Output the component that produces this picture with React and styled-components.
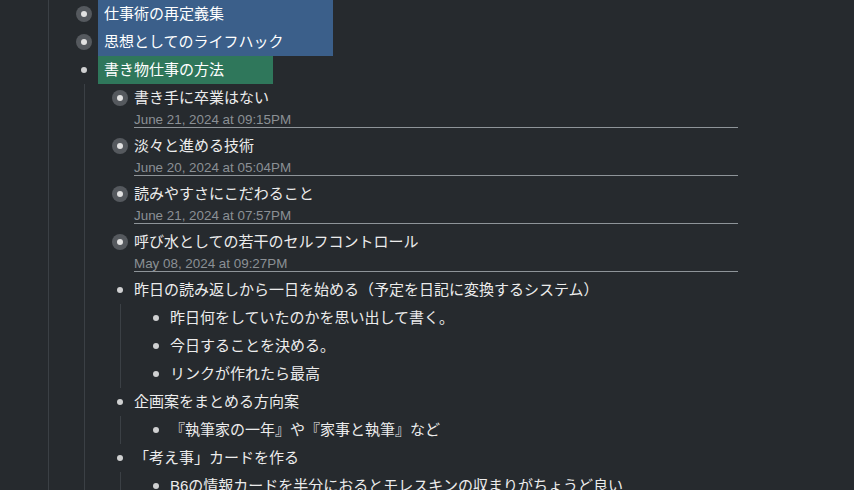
import React from 'react';
import styled, { createGlobalStyle } from 'styled-components';

const Global = createGlobalStyle`
  html, body { margin: 0; padding: 0; background: #262a2e; overflow: hidden; }
  body {
    font-family: "Liberation Sans", "Noto Sans CJK JP", sans-serif;
    color: #e8e8e8;
    -webkit-font-smoothing: antialiased;
  }
`;

const Page = styled.div`
  width: 854px;
  height: 490px;
  overflow: hidden;
`;

const Children = styled.div`
  margin-left: ${p => (p.$root ? 48 : 12)}px;
  border-left: 1px solid #3b4045;
  padding-left: 23px;
  min-height: ${p => (p.$root ? '490px' : '0')};
`;

const Row = styled.div`
  display: flex;
  align-items: flex-start;
  column-gap: 2px;
`;

const HighlightGroup = styled.div`
  display: grid;
  grid-template-columns: 24px max-content;
  column-gap: 2px;
  justify-content: start;
`;

const BulletBox = styled.div`
  width: 24px;
  height: 28px;
  flex: 0 0 24px;
  display: flex;
  align-items: center;
  justify-content: center;
`;

const Ring = styled.span`
  width: 16px;
  height: 16px;
  border-radius: 50%;
  background: #55595e;
  display: flex;
  align-items: center;
  justify-content: center;
`;

const Dot = styled.span`
  width: 6px;
  height: 6px;
  border-radius: 50%;
  background: ${p => (p.$inner ? '#e2e2e2' : '#cfd0d1')};
`;

const Title = styled.div`
  font-size: 15px;
  line-height: 28px;
  height: 28px;
  white-space: nowrap;
  color: #ececec;
`;

const Marked = styled(Title)`
  background: ${p => p.$color};
  color: #ffffff;
  padding: 0 49px 0 6px;
`;

const DatedBody = styled.div`
  width: 604px;
  border-bottom: 1px solid #8e9499;
  margin-bottom: 4px;
`;

const DateText = styled.div`
  font-family: "Liberation Sans", sans-serif;
  font-size: 13.4px;
  line-height: 15px;
  height: 15px;
  color: #8b9095;
  white-space: nowrap;
`;

const COLORS = { blue: '#3b5f8a', green: '#2f775b' };

const tree = [
  { text: '仕事術の再定義集', collapsed: true, hl: 'blue' },
  { text: '思想としてのライフハック', collapsed: true, hl: 'blue' },
  {
    text: '書き物仕事の方法',
    hl: 'green',
    children: [
      { text: '書き手に卒業はない', collapsed: true, date: 'June 21, 2024 at 09:15PM' },
      { text: '淡々と進める技術', collapsed: true, date: 'June 20, 2024 at 05:04PM' },
      { text: '読みやすさにこだわること', collapsed: true, date: 'June 21, 2024 at 07:57PM' },
      { text: '呼び水としての若干のセルフコントロール', collapsed: true, date: 'May 08, 2024 at 09:27PM' },
      {
        text: '昨日の読み返しから一日を始める（予定を日記に変換するシステム）',
        children: [
          { text: '昨日何をしていたのかを思い出して書く。' },
          { text: '今日することを決める。' },
          { text: 'リンクが作れたら最高' },
        ],
      },
      {
        text: '企画案をまとめる方向案',
        children: [{ text: '『執筆家の一年』や『家事と執筆』など' }],
      },
      {
        text: '「考え事」カードを作る',
        children: [{ text: 'B6の情報カードを半分におるとモレスキンの収まりがちょうど良い' }],
      },
    ],
  },
];

function Bullet({ collapsed }) {
  return (
    <BulletBox>
      {collapsed ? (
        <Ring>
          <Dot $inner />
        </Ring>
      ) : (
        <Dot />
      )}
    </BulletBox>
  );
}

function Node({ node }) {
  return (
    <>
      <Row>
        <Bullet collapsed={node.collapsed} />
        {node.date ? (
          <DatedBody>
            <Title>{node.text}</Title>
            <DateText>{node.date}</DateText>
          </DatedBody>
        ) : (
          <Title>{node.text}</Title>
        )}
      </Row>
      {node.children && <NodeList nodes={node.children} />}
    </>
  );
}

function Group({ nodes }) {
  const last = nodes[nodes.length - 1];
  return (
    <>
      <HighlightGroup>
        {nodes.map((n, i) => (
          <React.Fragment key={i}>
            <Bullet collapsed={n.collapsed} />
            <Marked $color={COLORS[n.hl]}>{n.text}</Marked>
          </React.Fragment>
        ))}
      </HighlightGroup>
      {last.children && <NodeList nodes={last.children} />}
    </>
  );
}

function NodeList({ nodes, root }) {
  const parts = [];
  let i = 0;
  while (i < nodes.length) {
    const n = nodes[i];
    if (n.hl) {
      const grp = [n];
      let j = i + 1;
      while (j < nodes.length && nodes[j].hl === n.hl && !nodes[j - 1].children) {
        grp.push(nodes[j]);
        j++;
      }
      parts.push(<Group key={i} nodes={grp} />);
      i = j;
    } else {
      parts.push(<Node key={i} node={n} />);
      i++;
    }
  }
  return <Children $root={root}>{parts}</Children>;
}

export default function App() {
  return (
    <Page>
      <Global />
      <NodeList nodes={tree} root />
    </Page>
  );
}
